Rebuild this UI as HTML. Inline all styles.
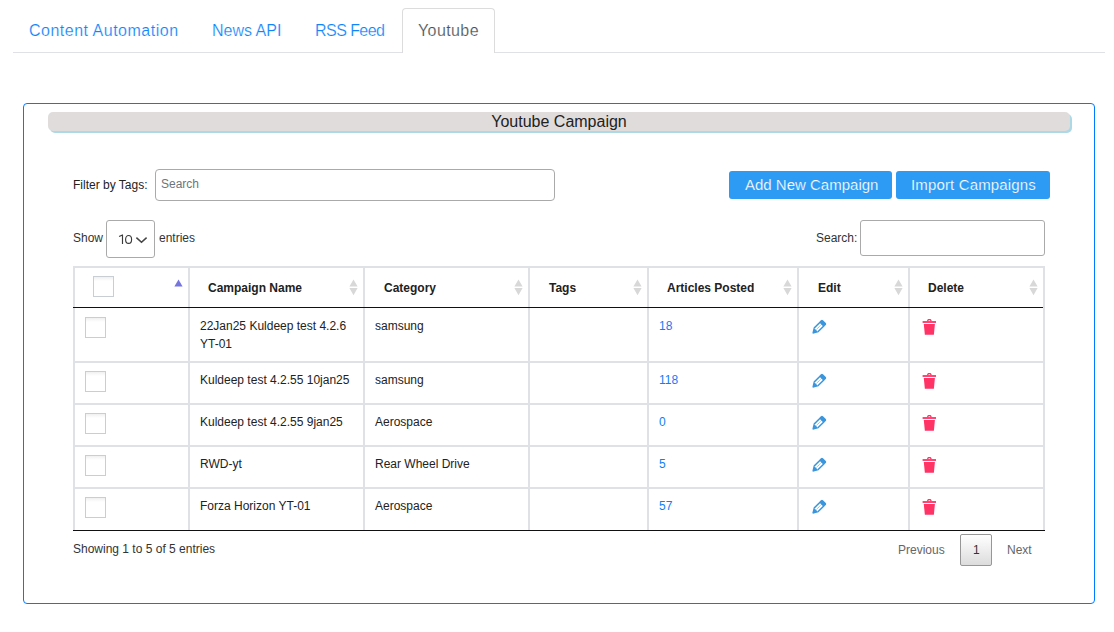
<!DOCTYPE html>
<html><head><meta charset="utf-8">
<style>
html,body{margin:0;padding:0;background:#fff;width:1114px;height:632px;overflow:hidden;position:relative;font-family:"Liberation Sans",sans-serif;color:#333;}
.a{position:absolute;white-space:nowrap;}
.t12{font-size:12px;line-height:14px;}
.tab{font-size:16px;line-height:18px;color:#0f84fb;-webkit-text-stroke:0.2px #fff;}
.navline{left:13px;top:52px;width:1092px;height:1px;background:#dee2e6;}
.activetab{left:402px;top:8px;width:91px;height:44px;border:1px solid #dcdcdc;border-bottom:none;border-radius:4px 4px 0 0;background:#fff;}
.panel{left:23px;top:103px;width:1070px;height:499px;border:1px solid #007bff;border-radius:4px;}
.hbar{left:48px;top:112px;width:1022px;height:19px;background:#e0dcdc;border-radius:5px;box-shadow:2px 2px 0 #add8e6;}
.inp{border:1px solid #aaa;border-radius:4px;background:#fff;box-sizing:border-box;}
.btn{background:#2d9af3;border-radius:3px;color:#fff;font-size:15px;line-height:17px;}
.btxt{-webkit-text-stroke:0.2px #2d9af3;}
.bl{background:#dee2e6;}
.th{font-weight:bold;font-size:12px;line-height:14px;color:#222;}
.cb{width:21px;height:21px;box-sizing:border-box;border:1px solid #c9ced5;background:linear-gradient(to bottom,#f0f0f0 0,#fff 4px);}
.lnk{color:#0d80f8;}
.td{color:#222;}
</style></head><body>
<!-- tabs -->
<div class="a navline"></div>
<div class="a activetab"></div>
<div class="a tab" style="left:29px;top:22px;letter-spacing:0.5px">Content Automation</div>
<div class="a tab" style="left:212px;top:22px;letter-spacing:0px">News API</div>
<div class="a tab" style="left:315px;top:22px;letter-spacing:-0.55px">RSS Feed</div>
<div class="a tab" style="left:418px;top:22px;letter-spacing:0.4px;color:#495057">Youtube</div>

<!-- panel -->
<div class="a panel"></div>
<div class="a hbar"></div>
<div class="a" style="left:48px;top:113px;width:1022px;text-align:center;font-size:16px;line-height:18px;color:#222">Youtube Campaign</div>

<!-- filter -->
<div class="a t12" style="left:73px;top:178px;color:#222">Filter by Tags:</div>
<div class="a inp" style="left:155px;top:169px;width:400px;height:32px"></div>
<div class="a t12" style="left:161px;top:177px;color:#6c757d">Search</div>
<div class="a btn" style="left:729px;top:171px;width:163px;height:28px"></div>
<div class="a btn btxt" style="left:745px;top:176px">Add New Campaign</div>
<div class="a btn" style="left:896px;top:171px;width:154px;height:28px"></div>
<div class="a btn btxt" style="left:911px;top:176px;letter-spacing:0.15px">Import Campaigns</div>

<!-- length / search -->
<div class="a t12" style="left:73px;top:231px;color:#333">Show</div>
<div class="a inp" style="left:106px;top:220px;width:49px;height:38px;border-radius:3px"></div>
<svg class="a" style="left:116px;top:231px" width="18" height="16" viewBox="0 0 18 16"><path d="M3.1 5.6 L6.5 3.9 V13" fill="none" stroke="#3a3a3a" stroke-width="1.15" stroke-linejoin="round"/><ellipse cx="12.6" cy="8.45" rx="3.0" ry="3.95" fill="none" stroke="#3a3a3a" stroke-width="1.15"/></svg>
<svg class="a" style="left:135px;top:235px" width="13" height="10" viewBox="0 0 13 10"><path d="M1.4 2.6 L6.5 7.2 L11.6 2.6" fill="none" stroke="#444" stroke-width="1.5"/></svg>
<div class="a t12" style="left:159px;top:231px;color:#333">entries</div>
<div class="a t12" style="left:816px;top:231px;color:#333">Search:</div>
<div class="a inp" style="left:860px;top:220px;width:185px;height:36px;border-radius:3px"></div>

<!-- table borders -->
<div class="a bl" style="left:73px;top:266px;width:972px;height:2px"></div>
<div class="a bl" style="left:73px;top:266px;width:2px;height:264px"></div>
<div class="a bl" style="left:188px;top:266px;width:2px;height:264px"></div>
<div class="a bl" style="left:363px;top:266px;width:2px;height:264px"></div>
<div class="a bl" style="left:528px;top:266px;width:2px;height:264px"></div>
<div class="a bl" style="left:647px;top:266px;width:2px;height:264px"></div>
<div class="a bl" style="left:797px;top:266px;width:2px;height:264px"></div>
<div class="a bl" style="left:908px;top:266px;width:2px;height:264px"></div>
<div class="a bl" style="left:1043px;top:266px;width:2px;height:264px"></div>
<div class="a" style="left:73px;top:307px;width:970px;height:1px;background:#111"></div>
<div class="a bl" style="left:73px;top:361px;width:972px;height:2px"></div>
<div class="a bl" style="left:73px;top:403px;width:972px;height:2px"></div>
<div class="a bl" style="left:73px;top:445px;width:972px;height:2px"></div>
<div class="a bl" style="left:73px;top:487px;width:972px;height:2px"></div>
<div class="a" style="left:73px;top:530px;width:972px;height:1px;background:#111"></div>

<!-- header -->
<div class="a cb" style="left:93px;top:276px"></div>
<svg class="a" style="left:174px;top:279px" width="9" height="8" viewBox="0 0 9 8"><path d="M4.5 0.5 L8.6 7.5 L0.4 7.5 Z" fill="#7575dd"/></svg>
<svg class="a" style="left:349px;top:279px" width="9" height="17" viewBox="0 0 9 17"><path d="M4.5 0.6 L8.6 7.6 L0.4 7.6 Z M0.4 9 L8.6 9 L4.5 16.2 Z" fill="#d8d8d8"/></svg>
<svg class="a" style="left:514px;top:279px" width="9" height="17" viewBox="0 0 9 17"><path d="M4.5 0.6 L8.6 7.6 L0.4 7.6 Z M0.4 9 L8.6 9 L4.5 16.2 Z" fill="#d8d8d8"/></svg>
<svg class="a" style="left:633px;top:279px" width="9" height="17" viewBox="0 0 9 17"><path d="M4.5 0.6 L8.6 7.6 L0.4 7.6 Z M0.4 9 L8.6 9 L4.5 16.2 Z" fill="#d8d8d8"/></svg>
<svg class="a" style="left:783px;top:279px" width="9" height="17" viewBox="0 0 9 17"><path d="M4.5 0.6 L8.6 7.6 L0.4 7.6 Z M0.4 9 L8.6 9 L4.5 16.2 Z" fill="#d8d8d8"/></svg>
<svg class="a" style="left:894px;top:279px" width="9" height="17" viewBox="0 0 9 17"><path d="M4.5 0.6 L8.6 7.6 L0.4 7.6 Z M0.4 9 L8.6 9 L4.5 16.2 Z" fill="#d8d8d8"/></svg>
<svg class="a" style="left:1029px;top:279px" width="9" height="17" viewBox="0 0 9 17"><path d="M4.5 0.6 L8.6 7.6 L0.4 7.6 Z M0.4 9 L8.6 9 L4.5 16.2 Z" fill="#d8d8d8"/></svg>
<div class="a th" style="left:208px;top:281px">Campaign Name</div>
<div class="a th" style="left:384px;top:281px">Category</div>
<div class="a th" style="left:549px;top:281px">Tags</div>
<div class="a th" style="left:667px;top:281px">Articles Posted</div>
<div class="a th" style="left:818px;top:281px">Edit</div>
<div class="a th" style="left:928px;top:281px">Delete</div>
<div class="a cb" style="left:85px;top:317px"></div>
<div class="a t12 td" style="left:200px;top:319px">22Jan25 Kuldeep test 4.2.6</div>
<div class="a t12 td" style="left:200px;top:337px">YT-01</div>
<div class="a t12 td" style="left:375px;top:319px">samsung</div>
<div class="a t12 lnk" style="left:659px;top:319px">18</div>
<svg class="a" style="left:809px;top:317px" width="20" height="20" viewBox="0 0 20 20"><g transform="rotate(45 10 10)"><rect x="6.6" y="2.4" width="6.8" height="4" rx="1.4" fill="#3a95dc"/><rect x="6.6" y="5.5" width="6.8" height="8.7" fill="#3a95dc"/><path d="M6.6 14.1 H13.4 L10.4 19 H9.6 Z" fill="#3a95dc"/><rect x="8.1" y="6.6" width="3.8" height="7.5" fill="#fff"/><path d="M10 6.6 V14.1" stroke="#3a95dc" stroke-width="0.7" stroke-dasharray="1 0.8"/></g></svg>
<svg class="a" style="left:921px;top:319px" width="16" height="18" viewBox="0 0 16 18"><path fill-rule="evenodd" d="M5.8 2.3 L6.6 0.6 Q6.8 0.1 7.4 0.1 H9.3 Q9.9 0.1 10.1 0.6 L10.9 2.3 Z M7.3 2.3 L7.7 1.3 H9 L9.4 2.3 Z" fill="#ff3366"/><rect x="1.6" y="2.1" width="13.4" height="1.8" fill="#ff3366"/><path d="M2.8 4.9 H13.9 L12.9 15.8 H3.85 Z" fill="#ff3366"/></svg>
<div class="a cb" style="left:85px;top:371px"></div>
<div class="a t12 td" style="left:200px;top:373px">Kuldeep test 4.2.55 10jan25</div>
<div class="a t12 td" style="left:375px;top:373px">samsung</div>
<div class="a t12 lnk" style="left:659px;top:373px">118</div>
<svg class="a" style="left:809px;top:371px" width="20" height="20" viewBox="0 0 20 20"><g transform="rotate(45 10 10)"><rect x="6.6" y="2.4" width="6.8" height="4" rx="1.4" fill="#3a95dc"/><rect x="6.6" y="5.5" width="6.8" height="8.7" fill="#3a95dc"/><path d="M6.6 14.1 H13.4 L10.4 19 H9.6 Z" fill="#3a95dc"/><rect x="8.1" y="6.6" width="3.8" height="7.5" fill="#fff"/><path d="M10 6.6 V14.1" stroke="#3a95dc" stroke-width="0.7" stroke-dasharray="1 0.8"/></g></svg>
<svg class="a" style="left:921px;top:373px" width="16" height="18" viewBox="0 0 16 18"><path fill-rule="evenodd" d="M5.8 2.3 L6.6 0.6 Q6.8 0.1 7.4 0.1 H9.3 Q9.9 0.1 10.1 0.6 L10.9 2.3 Z M7.3 2.3 L7.7 1.3 H9 L9.4 2.3 Z" fill="#ff3366"/><rect x="1.6" y="2.1" width="13.4" height="1.8" fill="#ff3366"/><path d="M2.8 4.9 H13.9 L12.9 15.8 H3.85 Z" fill="#ff3366"/></svg>
<div class="a cb" style="left:85px;top:413px"></div>
<div class="a t12 td" style="left:200px;top:415px">Kuldeep test 4.2.55 9jan25</div>
<div class="a t12 td" style="left:375px;top:415px">Aerospace</div>
<div class="a t12 lnk" style="left:659px;top:415px">0</div>
<svg class="a" style="left:809px;top:413px" width="20" height="20" viewBox="0 0 20 20"><g transform="rotate(45 10 10)"><rect x="6.6" y="2.4" width="6.8" height="4" rx="1.4" fill="#3a95dc"/><rect x="6.6" y="5.5" width="6.8" height="8.7" fill="#3a95dc"/><path d="M6.6 14.1 H13.4 L10.4 19 H9.6 Z" fill="#3a95dc"/><rect x="8.1" y="6.6" width="3.8" height="7.5" fill="#fff"/><path d="M10 6.6 V14.1" stroke="#3a95dc" stroke-width="0.7" stroke-dasharray="1 0.8"/></g></svg>
<svg class="a" style="left:921px;top:415px" width="16" height="18" viewBox="0 0 16 18"><path fill-rule="evenodd" d="M5.8 2.3 L6.6 0.6 Q6.8 0.1 7.4 0.1 H9.3 Q9.9 0.1 10.1 0.6 L10.9 2.3 Z M7.3 2.3 L7.7 1.3 H9 L9.4 2.3 Z" fill="#ff3366"/><rect x="1.6" y="2.1" width="13.4" height="1.8" fill="#ff3366"/><path d="M2.8 4.9 H13.9 L12.9 15.8 H3.85 Z" fill="#ff3366"/></svg>
<div class="a cb" style="left:85px;top:455px"></div>
<div class="a t12 td" style="left:200px;top:457px">RWD-yt</div>
<div class="a t12 td" style="left:375px;top:457px">Rear Wheel Drive</div>
<div class="a t12 lnk" style="left:659px;top:457px">5</div>
<svg class="a" style="left:809px;top:455px" width="20" height="20" viewBox="0 0 20 20"><g transform="rotate(45 10 10)"><rect x="6.6" y="2.4" width="6.8" height="4" rx="1.4" fill="#3a95dc"/><rect x="6.6" y="5.5" width="6.8" height="8.7" fill="#3a95dc"/><path d="M6.6 14.1 H13.4 L10.4 19 H9.6 Z" fill="#3a95dc"/><rect x="8.1" y="6.6" width="3.8" height="7.5" fill="#fff"/><path d="M10 6.6 V14.1" stroke="#3a95dc" stroke-width="0.7" stroke-dasharray="1 0.8"/></g></svg>
<svg class="a" style="left:921px;top:457px" width="16" height="18" viewBox="0 0 16 18"><path fill-rule="evenodd" d="M5.8 2.3 L6.6 0.6 Q6.8 0.1 7.4 0.1 H9.3 Q9.9 0.1 10.1 0.6 L10.9 2.3 Z M7.3 2.3 L7.7 1.3 H9 L9.4 2.3 Z" fill="#ff3366"/><rect x="1.6" y="2.1" width="13.4" height="1.8" fill="#ff3366"/><path d="M2.8 4.9 H13.9 L12.9 15.8 H3.85 Z" fill="#ff3366"/></svg>
<div class="a cb" style="left:85px;top:497px"></div>
<div class="a t12 td" style="left:200px;top:499px">Forza Horizon YT-01</div>
<div class="a t12 td" style="left:375px;top:499px">Aerospace</div>
<div class="a t12 lnk" style="left:659px;top:499px">57</div>
<svg class="a" style="left:809px;top:497px" width="20" height="20" viewBox="0 0 20 20"><g transform="rotate(45 10 10)"><rect x="6.6" y="2.4" width="6.8" height="4" rx="1.4" fill="#3a95dc"/><rect x="6.6" y="5.5" width="6.8" height="8.7" fill="#3a95dc"/><path d="M6.6 14.1 H13.4 L10.4 19 H9.6 Z" fill="#3a95dc"/><rect x="8.1" y="6.6" width="3.8" height="7.5" fill="#fff"/><path d="M10 6.6 V14.1" stroke="#3a95dc" stroke-width="0.7" stroke-dasharray="1 0.8"/></g></svg>
<svg class="a" style="left:921px;top:499px" width="16" height="18" viewBox="0 0 16 18"><path fill-rule="evenodd" d="M5.8 2.3 L6.6 0.6 Q6.8 0.1 7.4 0.1 H9.3 Q9.9 0.1 10.1 0.6 L10.9 2.3 Z M7.3 2.3 L7.7 1.3 H9 L9.4 2.3 Z" fill="#ff3366"/><rect x="1.6" y="2.1" width="13.4" height="1.8" fill="#ff3366"/><path d="M2.8 4.9 H13.9 L12.9 15.8 H3.85 Z" fill="#ff3366"/></svg>
<!-- footer -->
<div class="a t12" style="left:73px;top:542px;color:#333">Showing 1 to 5 of 5 entries</div>
<div class="a t12" style="left:898px;top:543px;color:#666">Previous</div>
<div class="a" style="left:960px;top:534px;width:30px;height:30px;border:1px solid #979797;border-radius:2px;background:linear-gradient(to bottom,#fff 0%,#dcdcdc 100%)"></div>
<div class="a t12" style="left:973px;top:543px;color:#333">1</div>
<div class="a t12" style="left:1007px;top:543px;color:#666">Next</div>
</body></html>
